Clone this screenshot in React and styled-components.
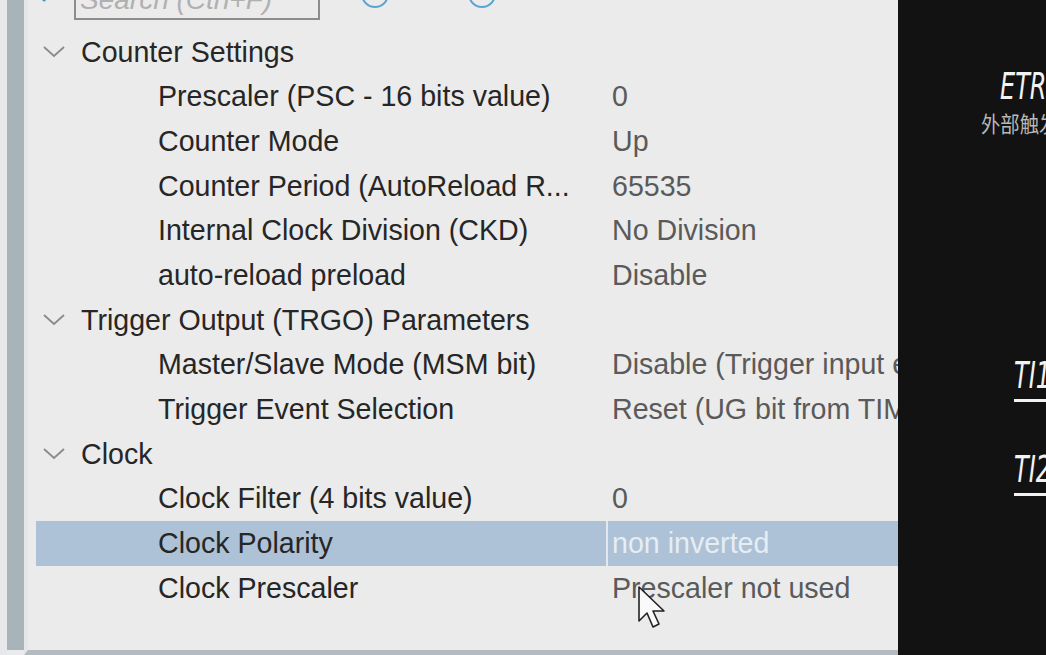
import React from 'react';
import styled, { createGlobalStyle } from 'styled-components';

const GlobalStyle = createGlobalStyle`
  html, body {
    margin: 0;
    padding: 0;
    width: 1046px;
    height: 655px;
    overflow: hidden;
    background: #e9ebec;
  }
  body {
    font-family: "Liberation Sans", Arial, sans-serif;
  }
`;

const Page = styled.div`
  display: flex;
  width: 1046px;
  height: 655px;
  overflow: hidden;
`;

const LeftRail = styled.div`
  width: 7px;
  background: #e6e8e9;
  flex-shrink: 0;
`;

const RailBar = styled.div`
  width: 17px;
  background: #a9b3ba;
  flex-shrink: 0;
  height: 650px;
`;

const Panel = styled.div`
  flex: 1;
  display: flex;
  flex-direction: column;
  height: 650px;
  border-bottom: 5px solid #b3bbc0;
  background: #ebebeb;
  border-left: 4px solid #e4e6e7;
  position: relative;
`;

const Toolbar = styled.div`
  height: 30px;
  display: flex;
  align-items: flex-end;
  padding-left: 14px;
  gap: 8px;
`;

const SearchIcon = styled.svg`
  width: 24px;
  height: 24px;
  margin-bottom: 20px;
`;

const SearchBox = styled.div`
  width: 246px;
  height: 34px;
  border: 2px solid #8c8c8c;
  margin-bottom: 10px;
  box-sizing: border-box;
  font-size: 28px;
  color: #b0b0b0;
  font-style: italic;
  padding-left: 4px;
  line-height: 24px;
  overflow: hidden;
  white-space: nowrap;
`;

const NavIcon = styled.svg`
  width: 30px;
  height: 30px;
  margin-bottom: 18px;
  margin-left: ${(p) => p.$gap}px;
`;

const Tree = styled.div`
  display: flex;
  flex-direction: column;
  padding-left: 8px;
`;

const Row = styled.div`
  display: grid;
  grid-template-columns: 570px 1fr;
  height: 44.65px;
  align-items: stretch;
  background: ${(p) => (p.$selected ? '#adc2d6' : 'transparent')};
`;

const LabelCell = styled.div`
  display: flex;
  align-items: center;
  padding-left: ${(p) => (p.$group ? 6 : 122)}px;
  font-size: 28.6px;
  color: #262626;
  white-space: nowrap;
  overflow: hidden;
`;

const Chevron = styled.svg`
  width: 24px;
  height: 14px;
  margin-right: 15px;
  flex-shrink: 0;
`;

const ValueCell = styled.div`
  display: flex;
  align-items: center;
  padding-left: 4px;
  font-size: 28.6px;
  color: ${(p) => (p.$selected ? '#e6edf3' : '#5a5a5a')};
  border-left: 2px solid ${(p) => (p.$selected ? '#e2e8ee' : 'transparent')};
  white-space: nowrap;
  overflow: hidden;
`;

const Cursor = styled.svg`
  position: absolute;
  left: 608px;
  top: 585px;
  width: 34px;
  height: 46px;
`;

const DarkPane = styled.div`
  width: 148px;
  flex-shrink: 0;
  background: #121212;
  position: relative;
  overflow: hidden;
`;

const EtrLabel = styled.div`
  position: absolute;
  left: 102px;
  top: 66px;
  font-family: "DejaVu Sans Condensed", "DejaVu Sans", sans-serif;
  font-style: italic;
  font-size: 37px;
  line-height: 42px;
  color: #f2f2f2;
  white-space: nowrap;
  transform: scaleX(0.72);
  transform-origin: left top;
`;

const EtrSub = styled.div`
  position: absolute;
  left: 83px;
  top: 109px;
  font-family: "Noto Sans CJK SC", sans-serif;
  font-size: 22px;
  line-height: 26px;
  color: #b8b8b8;
  white-space: nowrap;
  transform: scaleX(0.88);
  transform-origin: left top;
`;

const PinLabel = styled.div`
  position: absolute;
  left: 116px;
  top: ${(p) => p.$top}px;
  font-family: "DejaVu Sans Condensed", "DejaVu Sans", sans-serif;
  font-style: italic;
  font-size: 37px;
  color: #f2f2f2;
  white-space: nowrap;
  padding-bottom: 2px;
  border-bottom: 3px solid #f2f2f2;
  width: 60px;
  transform: scaleX(0.72);
  transform-origin: left top;
`;

const rows = [
  { group: true, label: 'Counter Settings' },
  { label: 'Prescaler (PSC - 16 bits value)', value: '0' },
  { label: 'Counter Mode', value: 'Up' },
  { label: 'Counter Period (AutoReload R...', value: '65535' },
  { label: 'Internal Clock Division (CKD)', value: 'No Division' },
  { label: 'auto-reload preload', value: 'Disable' },
  { group: true, label: 'Trigger Output (TRGO) Parameters' },
  { label: 'Master/Slave Mode (MSM bit)', value: 'Disable (Trigger input effect not delayed)' },
  { label: 'Trigger Event Selection', value: 'Reset (UG bit from TIMx_EGR)' },
  { group: true, label: 'Clock' },
  { label: 'Clock Filter (4 bits value)', value: '0' },
  { label: 'Clock Polarity', value: 'non inverted', selected: true },
  { label: 'Clock Prescaler', value: 'Prescaler not used' },
];

const App = () => (
  <>
    <GlobalStyle />
    <Page>
      <LeftRail />
      <RailBar />
      <Panel>
        <Toolbar>
          <SearchIcon viewBox="0 0 24 24">
            <circle cx="13" cy="3" r="7" fill="none" stroke="#3d94c8" strokeWidth="2.6" />
            <line x1="8" y1="8" x2="2" y2="14" stroke="#3d94c8" strokeWidth="3" strokeLinecap="round" />
          </SearchIcon>
          <SearchBox>Search (Ctrl+F)</SearchBox>
          <NavIcon viewBox="0 0 30 30" $gap={32}>
            <circle cx="15" cy="12" r="13" fill="none" stroke="#5aa5d0" strokeWidth="2" />
            <polyline points="17,6 12,11 17,16" fill="none" stroke="#5aa5d0" strokeWidth="2" />
          </NavIcon>
          <NavIcon viewBox="0 0 30 30" $gap={69}>
            <circle cx="15" cy="12" r="13" fill="none" stroke="#5aa5d0" strokeWidth="2" />
            <polyline points="13,6 18,11 13,16" fill="none" stroke="#5aa5d0" strokeWidth="2" />
          </NavIcon>
        </Toolbar>
        <Tree>
          {rows.map((r, i) => (
            <Row key={i} $selected={r.selected}>
              <LabelCell $group={r.group}>
                {r.group && (
                  <Chevron viewBox="0 0 24 14">
                    <polyline points="2,2 12,11 22,2" fill="none" stroke="#8a8a8a" strokeWidth="1.8" />
                  </Chevron>
                )}
                {r.label}
              </LabelCell>
              <ValueCell $selected={r.selected}>{r.value}</ValueCell>
            </Row>
          ))}
        </Tree>
        <Cursor viewBox="0 0 34 46">
          <path d="M3 2 L3 36 L11 28 L17 42 L23 39 L17 26 L28 26 Z" fill="#fafafa" stroke="#222" strokeWidth="1.6" strokeLinejoin="round" />
        </Cursor>
      </Panel>
      <DarkPane>
        <EtrLabel>ETR</EtrLabel>
        <EtrSub>外部触发</EtrSub>
        <PinLabel $top={354}>TI1</PinLabel>
        <PinLabel $top={448}>TI2</PinLabel>
      </DarkPane>
    </Page>
  </>
);

export default App;
